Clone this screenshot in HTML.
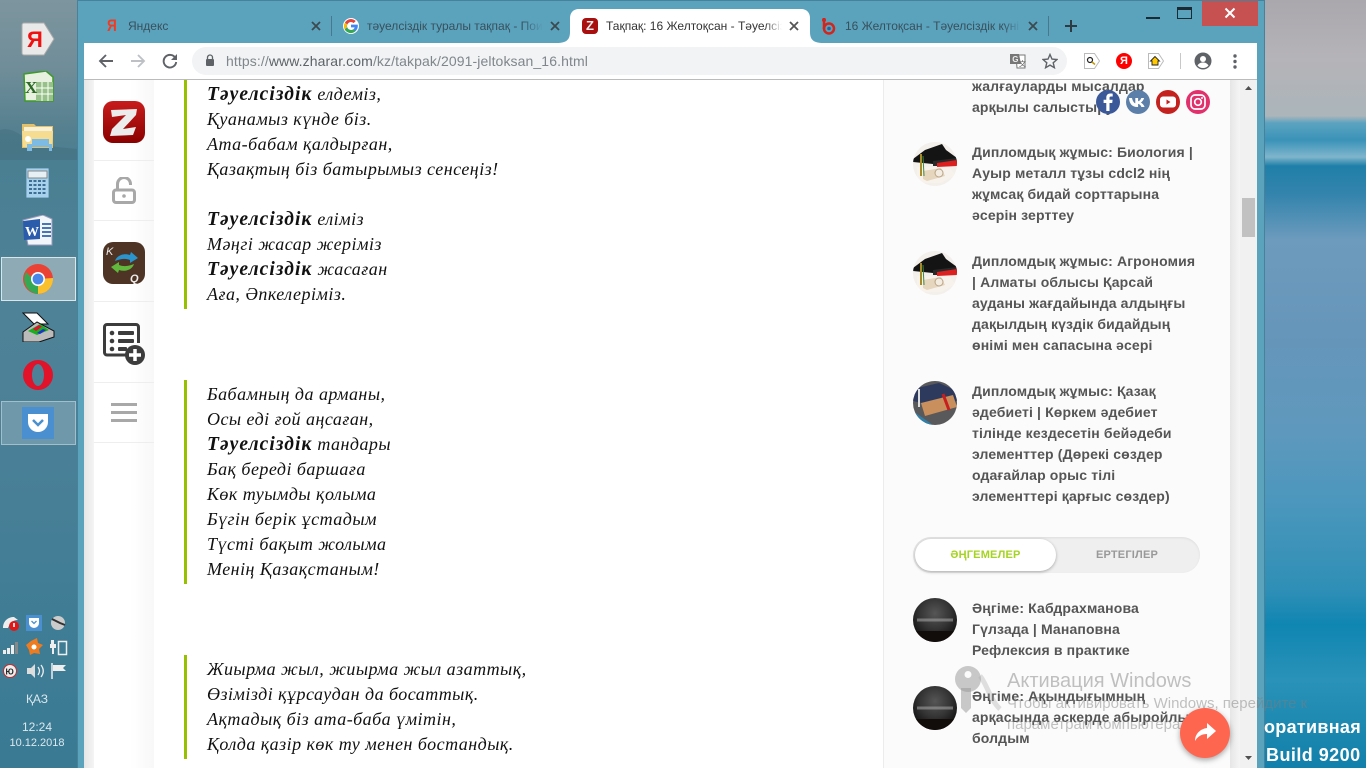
<!DOCTYPE html>
<html lang="kk"><head><meta charset="utf-8"><title>Тақпақ: 16 Желтоқсан</title>
<style>
html,body{margin:0;padding:0;width:1366px;height:768px;overflow:hidden;background:#3a8ab0}
*{box-sizing:border-box}
.a{position:absolute}
#r{position:absolute;left:0;top:0;width:1366px;height:768px;overflow:hidden;font-family:"Liberation Sans",sans-serif}
.p{position:absolute;left:207px;font:italic 18px/25px "Liberation Serif",serif;color:#111;white-space:nowrap;letter-spacing:.47px}
.p b{font-weight:bold;font-size:19.5px;letter-spacing:1.05px}
.s{position:absolute;left:972px;font:bold 14px/21px "Liberation Sans",sans-serif;color:#555;white-space:nowrap;letter-spacing:.14px}
.bar{position:absolute;left:184px;width:3px;background:#96c000}
.tab{position:absolute;top:18px;font:12px/16px "Liberation Sans",sans-serif;color:#3a4a52;white-space:nowrap;overflow:hidden}
.sep{position:absolute;left:94px;width:60px;height:1px;background:#eee}
.x{position:absolute;top:20px;width:12px;height:12px}
.tr{position:absolute;color:#dbe8ee;font:11px/14px "Liberation Sans",sans-serif;text-align:center;width:74px;left:0}
.w{position:absolute;white-space:nowrap;color:rgba(125,125,125,.48);font-family:"Liberation Sans",sans-serif}
</style></head><body><div id="r">

<!-- desktop left -->
<div class="a" style="left:0;top:0;width:78px;height:768px;background:linear-gradient(180deg,#7d959e 0,#6f8d99 70px,#55808f 130px,#4a7f92 160px,#4e8297 300px,#4a8097 450px,#3f7d95 620px,#3a7a93 768px)"></div>
<svg class="a" style="left:0;top:125px" width="78" height="35"><path d="M0 5c8-3 18 2 26 9 10 6 30 8 52 10v11H0z" fill="#44707f" opacity=".55"/></svg>
<!-- desktop right -->
<div class="a" style="left:1265px;top:0;width:101px;height:768px;background:linear-gradient(180deg,#aaa7ad 0,#b5b4b8 60px,#abb5ba 116px,#5ca3c0 123px,#3a93b8 140px,#7fb5cc 157px,#1f7fa8 166px,#3484ad 195px,#6d9bbd 240px,#6696ba 330px,#5f98bd 430px,#4c97bd 500px,#2f8fb6 590px,#0f86b2 625px,#2a92b8 680px,#1180aa 768px)"></div>

<!-- window frame -->
<div class="a" style="left:77px;top:0;width:1188px;height:768px;background:#5ba3bd;border:1px solid #47819a;border-bottom:0"></div>

<!-- tabs -->
<svg class="a" style="left:557px;top:9px" width="266" height="35"><path d="M0 34c9 0 13-3 13-11V9c0-5 3-9 9-9h222c6 0 9 4 9 9v14c0 8 4 11 13 11z" fill="#fff"/></svg>
<div class="a" style="left:331px;top:16px;width:1px;height:20px;background:#47788c"></div>
<div class="a" style="left:1048px;top:16px;width:1px;height:20px;background:#47788c"></div>

<div class="a" style="left:107px;top:16px;font:bold 17px/19px 'Liberation Sans',sans-serif;color:#f33a20;transform:scaleX(.8);transform-origin:left">Я</div>
<div class="tab" style="left:128px;width:100px;color:#38505c">Яндекс</div>
<svg class="x" style="left:310px" viewBox="0 0 12 12"><path d="M2 2l8 8M10 2l-8 8" stroke="#3c4a50" stroke-width="1.800"/></svg>

<svg class="a" style="left:343px;top:18px" width="16" height="16" viewBox="0 0 48 48"><circle cx="24" cy="24" r="24" fill="#fff"/><path d="M43 20H24v8h11c-1.500 5-5.500 8-11 8a12 12 0 1 1 8-21l6-6A20.500 20.500 0 1 0 44.500 24c0-1.400-.2-2.800-.5-4z" fill="#4285f4"/><path d="M6 14l7 5a12 12 0 0 1 19-4l6-6A20.500 20.500 0 0 0 6 14z" fill="#ea4335"/><path d="M5 34l7-5c2 4 6 7 12 7 3 0 6-1 8-2l6 5a20.500 20.500 0 0 1-33-5z" fill="#34a853"/><path d="M5 34a20 20 0 0 1 1-20l7 5a12 12 0 0 0-1 10z" fill="#fbbc05"/></svg>
<div class="tab" style="left:367px;width:176px;color:#38505c;-webkit-mask-image:linear-gradient(90deg,#000 88%,transparent)">тәуелсіздік туралы тақпақ - Поиск в Google</div>
<svg class="x" style="left:549px" viewBox="0 0 12 12"><path d="M2 2l8 8M10 2l-8 8" stroke="#3c4a50" stroke-width="1.800"/></svg>

<div class="a" style="left:582px;top:18px;width:16px;height:16px;border-radius:4px;background:#a80f0f;color:#eee;font:bold 13px/16px 'Liberation Sans',sans-serif;text-align:center">Z</div>
<div class="tab" style="left:606px;width:176px;color:#333;-webkit-mask-image:linear-gradient(90deg,#000 90%,transparent)">Тақпақ: 16 Желтоқсан - Тәуелсіздік күні</div>
<svg class="x" style="left:788px" viewBox="0 0 12 12"><path d="M2 2l8 8M10 2l-8 8" stroke="#555" stroke-width="1.800"/></svg>

<svg class="a" style="left:822px;top:17px" width="14" height="18" viewBox="0 0 14 18"><path d="M2 1v11" stroke="#d2251c" stroke-width="2.500"/><circle cx="7" cy="11.500" r="5" fill="none" stroke="#d2251c" stroke-width="2.500"/><circle cx="7" cy="11.500" r="1.800" fill="#2a5f9e"/><circle cx="2" cy="3" r="2" fill="#d2251c"/></svg>
<div class="tab" style="left:845px;width:176px;color:#38505c;-webkit-mask-image:linear-gradient(90deg,#000 90%,transparent)">16 Желтоқсан - Тәуелсіздік күні тақпақ</div>
<svg class="x" style="left:1027px" viewBox="0 0 12 12"><path d="M2 2l8 8M10 2l-8 8" stroke="#3c4a50" stroke-width="1.800"/></svg>
<svg class="a" style="left:1064px;top:19px" width="14" height="14"><path d="M7 1v12M1 7h12" stroke="#2f3b42" stroke-width="2"/></svg>

<!-- window controls -->
<div class="a" style="left:1146px;top:17px;width:14px;height:2px;background:#1c2b33"></div>
<div class="a" style="left:1177px;top:7px;width:15px;height:12px;border:1px solid #1c2b33;border-top:3px solid #1c2b33"></div>
<div class="a" style="left:1202px;top:1px;width:56px;height:25px;background:#c75050"></div>
<svg class="a" style="left:1224px;top:7px" width="12" height="12"><path d="M1.500 1.500l9 9M10.500 1.500l-9 9" stroke="#fff" stroke-width="2"/></svg>

<!-- toolbar -->
<div class="a" style="left:84px;top:43px;width:1173px;height:37px;background:#fff;border-bottom:1px solid #bbb"></div>
<svg class="a" style="left:98px;top:53px" width="16" height="16"><path d="M15 8H2M8 2L2 8l6 6" fill="none" stroke="#5f6368" stroke-width="1.900"/></svg>
<svg class="a" style="left:130px;top:53px" width="16" height="16"><path d="M1 8h13M8 2l6 6-6 6" fill="none" stroke="#bdc1c6" stroke-width="1.900"/></svg>
<svg class="a" style="left:162px;top:53px" width="16" height="16" viewBox="0 0 16 16"><path d="M13.500 5.200A6.300 6.300 0 1 0 14.200 9" fill="none" stroke="#5f6368" stroke-width="1.900"/><path d="M15 1v6H9z" fill="#5f6368"/></svg>
<div class="a" style="left:192px;top:47px;width:875px;height:28px;border-radius:14px;background:#f1f3f4"></div>
<svg class="a" style="left:205px;top:54px" width="10" height="13" viewBox="0 0 10 13"><path d="M2.500 5V3.500a2.500 2.500 0 0 1 5 0V5" fill="none" stroke="#5f6368" stroke-width="1.300"/><rect x="1" y="5" width="8" height="7" rx="1" fill="#5f6368"/></svg>
<div class="a" style="left:226px;top:53px;font:14px/16px 'Liberation Sans',sans-serif;color:#80868b;white-space:nowrap;letter-spacing:.1px">https://<span style="color:#5f6368">www.zharar.com</span>/kz/takpak/2091-jeltoksan_16.html</div>
<svg class="a" style="left:1010px;top:53px" width="16" height="16" viewBox="0 0 16 16"><path d="M6 2h9v13H7z" fill="#fff" stroke="#777"/><path d="M0 1h9l2 10H0z" fill="#777"/><text x="2.200" y="9" font-size="8" font-weight="bold" fill="#eee" font-family="Liberation Sans">G</text><text x="9" y="13" font-size="7" fill="#555" font-family="Liberation Sans">文</text></svg>
<svg class="a" style="left:1042px;top:53px" width="16" height="16" viewBox="0 0 16 16"><path d="M8 1.500l2 4.600 5 .4-3.800 3.300 1.200 4.900L8 12.100l-4.400 2.600 1.200-4.900L1 6.500l5-.4z" fill="none" stroke="#5f6368" stroke-width="1.400"/></svg>
<svg class="a" style="left:1084px;top:53px" width="16" height="16" viewBox="0 0 16 16"><path d="M.5.500h10l5 7.500-5 7.500H.5z" fill="#fff" stroke="#bbb"/><circle cx="6" cy="7" r="2.500" fill="#fff" stroke="#222" stroke-width="1.200"/><path d="M8 9l3 2.500" stroke="#c49a00" stroke-width="1.500"/></svg>
<div class="a" style="left:1116px;top:53px;width:16px;height:16px;border-radius:50%;background:#f00;color:#fff;font:bold 11px/16px 'Liberation Sans',sans-serif;text-align:center">Я</div>
<svg class="a" style="left:1148px;top:53px" width="16" height="16" viewBox="0 0 16 16"><path d="M.5.500h10l5 7.500-5 7.500H.5z" fill="#fff" stroke="#bbb"/><path d="M7 3.500L2.500 8H4v4h6V8h1.500z" fill="#ffc800" stroke="#222" stroke-width=".9"/></svg>
<div class="a" style="left:1180px;top:53px;width:1px;height:16px;background:#c8c8c8"></div>
<svg class="a" style="left:1194px;top:52px" width="18" height="18" viewBox="0 0 18 18"><circle cx="9" cy="9" r="8.500" fill="#5f6368"/><circle cx="9" cy="7" r="3" fill="#fff"/><path d="M3.500 13.500c1.500-2.500 3.500-3 5.500-3s4 .5 5.500 3A7 7 0 0 1 9 16a7 7 0 0 1-5.500-2.500z" fill="#fff"/></svg>
<svg class="a" style="left:1233px;top:54px" width="4" height="15"><circle cx="2" cy="2" r="1.700" fill="#5f6368"/><circle cx="2" cy="7.500" r="1.700" fill="#5f6368"/><circle cx="2" cy="13" r="1.700" fill="#5f6368"/></svg>

<!-- page -->
<div class="a" style="left:84px;top:80px;width:1156px;height:688px;background:#fff"></div>
<div class="a" style="left:84px;top:80px;width:10px;height:688px;background:linear-gradient(90deg,#e6e6e6,#f4f4f4)"></div>
<div class="a" style="left:94px;top:80px;width:60px;height:688px;background:linear-gradient(90deg,#fff 60%,#f8f8f8)"></div>
<div class="sep" style="top:160px"></div><div class="sep" style="top:220px"></div><div class="sep" style="top:301px"></div><div class="sep" style="top:382px"></div><div class="sep" style="top:442px"></div>

<!-- nav icons -->
<svg class="a" style="left:103px;top:101px" width="42" height="42" viewBox="0 0 42 42"><defs><linearGradient id="zg" x1="0" y1="0" x2="0" y2="1"><stop offset="0" stop-color="#c81c1c"/><stop offset="1" stop-color="#8a0000"/></linearGradient></defs><rect width="42" height="42" rx="10" fill="url(#zg)"/><path d="M8 9l26-1-1 6-13 14 13-2-3 8-23 1 2-7 14-14-14 2z" fill="#ececec"/></svg>
<svg class="a" style="left:112px;top:177px" width="24" height="27" viewBox="0 0 24 27"><path d="M5.500 12V7a6.500 6.500 0 0 1 13 0v1" fill="none" stroke="#a8a8a8" stroke-width="3"/><rect x="1.500" y="13" width="21" height="12.500" rx="2.500" fill="none" stroke="#a8a8a8" stroke-width="3"/><circle cx="12" cy="19" r="1.800" fill="#a8a8a8"/></svg>
<svg class="a" style="left:103px;top:242px" width="42" height="42" viewBox="0 0 42 42"><rect width="42" height="42" rx="10" fill="#4d3425"/><path d="M12 19c2-6 9-8 15-6l1-3 7 6-8 5 0-3c-5-2-10-1-15 1z" fill="#2a94cc"/><path d="M31 22c-2 6-9 8-15 6l-1 3-7-6 8-5 0 3c5 2 10 1 15-1z" fill="#62b83c"/><text x="3" y="13" font-size="11" font-style="italic" fill="#eee" font-family="Liberation Sans">K</text><text x="27" y="40" font-size="11" font-weight="bold" font-style="italic" fill="#eee" font-family="Liberation Sans">Q</text></svg>
<svg class="a" style="left:103px;top:323px" width="42" height="42" viewBox="0 0 42 42"><path d="M27 32H4a2.500 2.500 0 0 1-2.500-2.500V4A2.500 2.500 0 0 1 4 1.500h29A2.500 2.500 0 0 1 35.500 4v16" fill="none" stroke="#3c3c3c" stroke-width="3"/><circle cx="9" cy="10" r="2.300" fill="#3c3c3c"/><circle cx="9" cy="18" r="2.300" fill="#3c3c3c"/><circle cx="9" cy="26" r="2.300" fill="#3c3c3c"/><rect x="15" y="8" width="16" height="4" rx="1" fill="#3c3c3c"/><rect x="15" y="16" width="16" height="4" rx="1" fill="#3c3c3c"/><rect x="15" y="24" width="9" height="4" rx="1" fill="#3c3c3c"/><circle cx="32" cy="32" r="10" fill="#3c3c3c"/><path d="M32 26v12M26 32h12" stroke="#fff" stroke-width="3.500"/></svg>
<div class="a" style="left:111px;top:403px;width:26px;height:3px;background:#a8a8a8"></div>
<div class="a" style="left:111px;top:411px;width:26px;height:3px;background:#a8a8a8"></div>
<div class="a" style="left:111px;top:419px;width:26px;height:3px;background:#a8a8a8"></div>

<!-- poem -->
<div class="bar" style="top:80px;height:229px"></div>
<div class="bar" style="top:380px;height:204px"></div>
<div class="bar" style="top:655px;height:104px"></div>
<div class="p" style="top:82px"><b>Тәуелсіздік</b> елдеміз,</div>
<div class="p" style="top:107px">Қуанамыз күнде біз.</div>
<div class="p" style="top:132px">Ата-бабам қалдырған,</div>
<div class="p" style="top:157px">Қазақтың біз батырымыз сенсеңіз!</div>
<div class="p" style="top:207px"><b>Тәуелсіздік</b> еліміз</div>
<div class="p" style="top:232px">Мәңгі жасар жеріміз</div>
<div class="p" style="top:257px"><b>Тәуелсіздік</b> жасаған</div>
<div class="p" style="top:282px">Аға, Әпкелеріміз.</div>
<div class="p" style="top:382px">Бабамның да арманы,</div>
<div class="p" style="top:407px">Осы еді ғой аңсаған,</div>
<div class="p" style="top:432px"><b>Тәуелсіздік</b> тандары</div>
<div class="p" style="top:457px">Бақ береді баршаға</div>
<div class="p" style="top:482px">Көк туымды қолыма</div>
<div class="p" style="top:507px">Бүгін берік ұстадым</div>
<div class="p" style="top:532px">Түсті бақыт жолыма</div>
<div class="p" style="top:557px">Менің Қазақстаным!</div>
<div class="p" style="top:657px">Жиырма жыл, жиырма жыл азаттық,</div>
<div class="p" style="top:682px">Өзімізді құрсаудан да босаттық.</div>
<div class="p" style="top:707px">Ақтадық біз ата-баба үмітін,</div>
<div class="p" style="top:732px">Қолда қазір көк ту менен бостандық.</div>

<!-- sidebar -->
<div class="a" style="left:883px;top:80px;width:348px;height:688px;background:#fbfbfb;border-left:1px solid #ececec"></div>
<div class="a" style="left:1230px;top:80px;width:10px;height:688px;background:linear-gradient(90deg,#e6e6e6,#f5f5f5)"></div>
<div class="s" style="top:76px">жалғауларды мысалдар</div>
<div class="s" style="top:97px">арқылы салыстыру</div>

<svg class="a" style="left:913px;top:142px" width="44" height="44" viewBox="0 0 44 44"><defs><clipPath id="c"><circle cx="22" cy="22" r="22"/></clipPath><g id="cap"><rect width="44" height="44" fill="#f3efea"/><path d="M0 17L12 8l17-6 4 6 11 8v6L20 22 0 20z" fill="#141414"/><path d="M20 19l24-3v6l-10 2H20z" fill="#2a2a2a"/><path d="M24 21l20-3v6l-20 1z" fill="#dc1f1f"/><path d="M4 25h32l6 8-14 8H10l-6-6z" fill="#f7f3ec"/><path d="M10 29l18-3 4 8-18 5-4-2z" fill="#e6d6bd"/><circle cx="26" cy="31" r="4" fill="#f4ece0" stroke="#b9a487"/><path d="M8 12v22" stroke="#a88a2a" stroke-width="2"/><path d="M10 14l1 20" stroke="#3e8a3a"/></g></defs><g clip-path="url(#c)"><use href="#cap"/></g></svg>
<div class="s" style="top:142px">Дипломдық жұмыс: Биология |</div>
<div class="s" style="top:163px">Ауыр металл тұзы cdcl2 нің</div>
<div class="s" style="top:184px">жұмсақ бидай сорттарына</div>
<div class="s" style="top:205px">әсерін зерттеу</div>

<svg class="a" style="left:913px;top:251px" width="44" height="44" viewBox="0 0 44 44"><g clip-path="url(#c)"><use href="#cap"/></g></svg>
<div class="s" style="top:251px">Дипломдық жұмыс: Агрономия</div>
<div class="s" style="top:272px">| Алматы облысы Қарсай</div>
<div class="s" style="top:293px">ауданы жағдайында алдыңғы</div>
<div class="s" style="top:314px">дақылдың күздік бидайдың</div>
<div class="s" style="top:335px">өнімі мен сапасына әсері</div>

<svg class="a" style="left:913px;top:381px" width="44" height="44" viewBox="0 0 44 44"><g clip-path="url(#c)"><rect width="44" height="44" fill="#59585a"/><path d="M0 8l26-6 18 8v10l-18 6L0 20z" fill="#2d3a5e"/><path d="M8 22l32-8 4 12-32 9z" fill="#c98f5c"/><path d="M30 13l6 16" stroke="#c81e1e" stroke-width="3"/><path d="M0 30l20 14H0z" fill="#2f7fa8"/><path d="M6 8v18" stroke="#ddd" stroke-width="2"/></g></svg>
<div class="s" style="top:381px">Дипломдық жұмыс: Қазақ</div>
<div class="s" style="top:402px">әдебиеті | Көркем әдебиет</div>
<div class="s" style="top:423px">тілінде кездесетін бейәдеби</div>
<div class="s" style="top:444px">элементтер (Дөрекі сөздер</div>
<div class="s" style="top:465px">одағайлар орыс тілі</div>
<div class="s" style="top:486px">элементтері қарғыс сөздер)</div>

<!-- pill -->
<div class="a" style="left:913px;top:537px;width:287px;height:36px;border-radius:18px;background:#efefef;box-shadow:inset 0 1px 2px #ddd"></div>
<div class="a" style="left:915px;top:539px;width:141px;height:32px;border-radius:16px;background:#fff;box-shadow:0 1px 3px rgba(0,0,0,.3)"></div>
<div class="a" style="left:915px;top:549px;width:141px;text-align:center;font:bold 11px/13px 'Liberation Sans',sans-serif;color:#a5d322;letter-spacing:.2px">ӘҢГЕМЕЛЕР</div>
<div class="a" style="left:1056px;top:549px;width:142px;text-align:center;font:bold 11px/13px 'Liberation Sans',sans-serif;color:#999;letter-spacing:.2px">ЕРТЕГІЛЕР</div>

<svg class="a" style="left:913px;top:598px" width="44" height="44" viewBox="0 0 44 44"><defs><radialGradient id="d" cy=".35" r=".6"><stop offset="0" stop-color="#565656"/><stop offset=".6" stop-color="#333"/><stop offset="1" stop-color="#141414"/></radialGradient><g id="bk"><circle cx="22" cy="22" r="22" fill="url(#d)"/><path d="M4 20.500h36v3H4z" fill="#aaa" opacity=".55"/><path d="M0 33h44v11H0z" fill="#120c0a" clip-path="url(#c)"/></g></defs><use href="#bk"/></svg>
<div class="s" style="top:598px">Әңгіме: Кабдрахманова</div>
<div class="s" style="top:619px">Гүлзада | Манаповна</div>
<div class="s" style="top:640px">Рефлексия в практике</div>
<svg class="a" style="left:913px;top:686px" width="44" height="44" viewBox="0 0 44 44"><use href="#bk"/></svg>
<div class="s" style="top:686px">Әңгіме: Ақындығымның</div>
<div class="s" style="top:707px">арқасында әскерде абыройлы</div>
<div class="s" style="top:728px">болдым</div>

<!-- scrollbar -->
<div class="a" style="left:1240px;top:80px;width:17px;height:688px;background:#f1f1f1"></div>
<div class="a" style="left:1242px;top:198px;width:13px;height:39px;background:#c1c1c1"></div>
<svg class="a" style="left:1244px;top:85px" width="9" height="6"><path d="M4.500 1L8 5H1z" fill="#505050"/></svg>
<svg class="a" style="left:1244px;top:755px" width="9" height="6"><path d="M1 1h7L4.500 5z" fill="#505050"/></svg>

<!-- socials -->
<svg class="a" style="left:1096px;top:90px" width="116" height="24" viewBox="0 0 116 24">
<circle cx="12" cy="12" r="12" fill="#3b5998"/><path d="M13.500 21v-8h2.700l.4-3.200h-3.100V8c0-.9.300-1.500 1.600-1.500h1.600V3.600c-.3 0-1.300-.1-2.400-.1-2.400 0-4 1.400-4 4.100v2.200H7.600V13h2.700v8z" fill="#fff"/>
<circle cx="42" cy="12" r="12" fill="#5b7fa8"/><path d="M33 8h3c.3 2 1.800 5 3.300 5.300V8h2.800v3.300c1.300-.2 2.600-1.700 3.200-3.300h2.800c-.5 2-2.200 4-3.300 4.500 1.200.6 3 2.200 3.700 4.500H45.400c-.6-1.700-2-3-3.300-3.100V17h-.8C36 17 33.300 13.500 33 8z" fill="#fff"/>
<circle cx="72" cy="12" r="12" fill="#c4221f"/><rect x="64" y="6.500" width="16" height="11" rx="3" fill="#fff"/><path d="M70.500 9.500l4 2.500-4 2.500z" fill="#c4221f"/>
<circle cx="102" cy="12" r="12" fill="#e1306c"/><rect x="95" y="5" width="14" height="14" rx="4" fill="none" stroke="#fff" stroke-width="1.700"/><circle cx="102" cy="12" r="3.300" fill="none" stroke="#fff" stroke-width="1.700"/><circle cx="106" cy="8" r="1" fill="#fff"/></svg>

<!-- left desktop icons -->
<svg class="a" style="left:21px;top:22px" width="34" height="34" viewBox="0 0 34 34"><path d="M3 1h20l10 16-10 16H3a2 2 0 0 1-2-2V3a2 2 0 0 1 2-2z" fill="#e9e9e9" stroke="#aaa"/><text x="6" y="25" font-size="22" font-weight="bold" fill="#f01010" font-family="Liberation Sans">Я</text></svg>
<svg class="a" style="left:22px;top:71px" width="33" height="32" viewBox="0 0 33 32"><path d="M2 3l22-3 7 6v24H3z" fill="#e8f0df" stroke="#3f9a2a" stroke-width="1.500"/><path d="M14 11h17v19H14z" fill="#98c08a"/><path d="M14 17h17M14 23h17M20 11v19M26 11v19" stroke="#fff"/><text x="3" y="22" font-size="17" font-weight="bold" fill="#2a6a25" font-family="Liberation Serif">X</text></svg>
<svg class="a" style="left:22px;top:122px" width="32" height="29" viewBox="0 0 32 29"><path d="M0 2h12l2 2h17v22H0z" fill="#e4c169"/><path d="M2 5h28v5H2z" fill="#f7f1d8"/><path d="M0 9h31l-1 16H1z" fill="#f6dc90"/><path d="M10 17h17v5h3v7h-3v-4H10v4H5v-7h5z" fill="#7dbbe4"/><circle cx="6" cy="17" r="3" fill="#fff"/></svg>
<svg class="a" style="left:26px;top:168px" width="23" height="30" viewBox="0 0 23 30"><rect width="23" height="30" rx="1" fill="#a8d2ec" stroke="#5a8eb0"/><rect x="2" y="3" width="19" height="7" fill="#e6f0f5" stroke="#888"/><path d="M3 13h17M3 17h17M3 21h17M3 25h17" stroke="#3d6f96" stroke-width="2" stroke-dasharray="3 1.500"/></svg>
<svg class="a" style="left:22px;top:215px" width="32" height="31" viewBox="0 0 32 31"><path d="M1 5l20-5 9 4v26H6z" fill="#f2f5fa" stroke="#99b"/><path d="M1 6l17-2v20L2 25z" fill="#2a5cab"/><text x="3" y="21" font-size="14" font-weight="bold" fill="#fff" font-family="Liberation Serif">W</text><path d="M20 9h9M20 13h9M20 17h9M20 21h9" stroke="#4a76b8" stroke-width="2"/></svg>

<div class="a" style="left:1px;top:257px;width:75px;height:44px;background:#8eabb5;border:1px solid #d9e6ea"></div>
<svg class="a" style="left:23px;top:264px" width="30" height="30" viewBox="0 0 30 30"><circle cx="15" cy="15" r="15" fill="#ea4335"/><path d="M15 15L3 8v0A15 15 0 0 0 15 30z" fill="#34a853"/><path d="M15 15l15-1a15 15 0 0 1-15 16z" fill="#fbc02d"/><path d="M3 8A15 15 0 0 1 28 8H15a7 7 0 0 0-7 5z" fill="#ea4335"/><circle cx="15" cy="15" r="7" fill="#fff"/><circle cx="15" cy="15" r="5.400" fill="#4a86e8"/></svg>
<svg class="a" style="left:22px;top:312px" width="33" height="30" viewBox="0 0 33 30"><path d="M1 1h14l11 11H12z" fill="#fff" stroke="#111"/><path d="M1 20l14-10 17 9v6l-15 5H1z" fill="#bbb" stroke="#111"/><path d="M6 19l12-7 9 6-12 5z" fill="#18b020"/><path d="M11 17l6-4 3 1.500-6 4.500z" fill="#e01030"/><path d="M15 21l6-4 3 1-6 4z" fill="#2030d0"/></svg>
<svg class="a" style="left:23px;top:360px" width="30" height="30" viewBox="0 0 30 30"><circle cx="15" cy="15" r="15" fill="#e0132b"/><ellipse cx="15" cy="15" rx="6" ry="11" fill="#4d8197"/></svg>
<div class="a" style="left:1px;top:401px;width:75px;height:44px;background:#6f99aa;border:1px solid #a3bec9"></div>
<div class="a" style="left:22px;top:407px;width:32px;height:32px;background:#4a90d0"></div>
<svg class="a" style="left:27px;top:413px" width="22" height="20" viewBox="0 0 22 20"><path d="M1 1h20v8a10 10 0 0 1-20 0z" fill="#fff"/><path d="M6 7l5 5 5-5" fill="none" stroke="#4a90d0" stroke-width="2.500"/></svg>

<!-- tray -->
<svg class="a" style="left:2px;top:614px" width="66" height="18" viewBox="0 0 66 18"><path d="M1 14c0-7 5-11 11-11l4 3c-5 0-8 3-10 8z" fill="#eee"/><circle cx="12" cy="12" r="5" fill="#e01818"/><rect x="11.200" y="9" width="1.600" height="4" fill="#fff"/><rect x="24" y="1" width="16" height="16" fill="#4a90d0"/><path d="M27 4h10v5a5 5 0 0 1-10 0z" fill="#fff"/><path d="M29.500 7l2.500 2.500L34.500 7" fill="none" stroke="#4a90d0" stroke-width="1.300"/><circle cx="56" cy="9" r="7" fill="#ccc"/><path d="M50 5l8 4 5 2" stroke="#333" stroke-width="2"/></svg>
<svg class="a" style="left:2px;top:638px" width="66" height="18" viewBox="0 0 66 18"><path d="M1 12h3v4H1zM5 10h3v6H5zM9 7h3v9H9z" fill="#eee"/><path d="M13 4h3v12h-3z" fill="#888"/><path d="M24 7l5-4 6-3 1 5 5 2-4 4 1 5-6-1-4 2-1-5z" fill="#ee7b1e"/><circle cx="32" cy="9" r="2.500" fill="#fff"/><path d="M49 2h3v4h2v4h-2v6h-2v-6h-2V6h1z" fill="#eee"/><rect x="56.500" y="3.500" width="8" height="13" fill="none" stroke="#eee" stroke-width="1.500"/></svg>
<svg class="a" style="left:2px;top:662px" width="66" height="18" viewBox="0 0 66 18"><circle cx="8" cy="9" r="6.500" fill="#eee" stroke="#c03030"/><text x="3.500" y="12.500" font-size="8" font-weight="bold" fill="#222" font-family="Liberation Sans">Ю</text><path d="M25 6h4l4-4v14l-4-4h-4z" fill="#ddd"/><path d="M36 5c2 3 2 5 0 8M39 3c3 4 3 8 0 12" fill="none" stroke="#eee" stroke-width="1.300"/><path d="M50 1v16" stroke="#eee" stroke-width="1.500"/><path d="M51 3h13l-3 3 3 3H51z" fill="#eee"/></svg>
<div class="tr" style="top:692px;font-size:12px">ҚАЗ</div>
<div class="tr" style="top:720px;font-size:12px">12:24</div>
<div class="tr" style="top:736px">10.12.2018</div>

<!-- watermark -->
<svg class="a" style="left:953px;top:664px" width="50" height="52" viewBox="0 0 50 52"><path d="M15 2a13 13 0 1 0 0 26 13 13 0 0 0 0-26zm0 5a3.500 3.500 0 1 1 0 7 3.500 3.500 0 0 1 0-7z" fill="rgba(150,150,150,.5)"/><path d="M8 24v20l5 5 5-5V24z" fill="rgba(150,150,150,.5)"/><path d="M27 12c6 6 10 24 20 33" fill="none" stroke="rgba(170,170,170,.35)" stroke-width="5"/></svg>
<div class="w" style="left:1007px;top:670px;font-size:20px;line-height:23px">Активация Windows</div>
<div class="w" style="left:1007px;top:695px;font-size:15px;line-height:17px">Чтобы активировать Windows, перейдите к</div>
<div class="w" style="left:1007px;top:716px;font-size:15px;line-height:17px">параметрам компьютера.</div>

<div class="a" style="left:1264px;top:716px;font:bold 18px/22px 'Liberation Sans',sans-serif;color:#fff;white-space:nowrap;letter-spacing:.3px">оративная</div>
<div class="a" style="left:1266px;top:744px;font:bold 18px/22px 'Liberation Sans',sans-serif;color:#fff;white-space:nowrap;letter-spacing:.45px">Build 9200</div>

<!-- fab -->
<div class="a" style="left:1180px;top:708px;width:50px;height:50px;border-radius:50%;background:#ff6650;box-shadow:0 2px 6px rgba(0,0,0,.35)"></div>
<svg class="a" style="left:1195px;top:723px" width="21" height="19" viewBox="0 0 21 19"><path d="M12 0l9 8-9 8v-5C7 11 3 13 0 18c0-7 5-12 12-13z" fill="#fff"/></svg>
</div></body></html>
